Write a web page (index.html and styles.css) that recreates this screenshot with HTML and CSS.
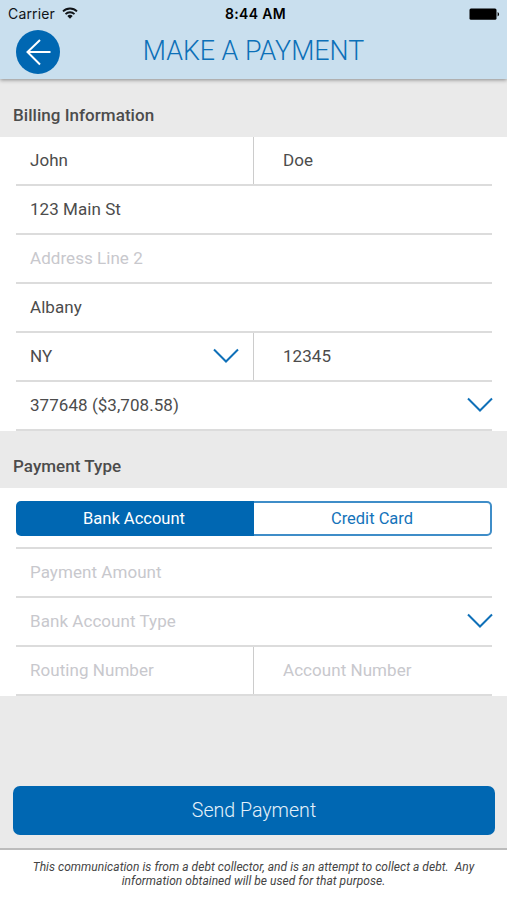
FILE: index.html
```html
<!DOCTYPE html>
<html lang="en">
<head>
<meta charset="utf-8">
<title>Make a Payment</title>
<link rel="stylesheet" href="styles.css">
</head>
<body>
<div class="screen">
  <header class="header">
    <div class="status">
      <div class="carrier"><span>Carrier</span>
        <svg class="wifi" viewBox="0 0 16 12" width="16" height="12"><g fill="none" stroke="#101418" stroke-width="1.8"><path d="M1 4.400a9.900 9.900 0 0 1 14 0"/><path d="M3.500 7.100a6.400 6.400 0 0 1 9 0"/></g><path d="M8 11.700 5.300 9a3.800 3.800 0 0 1 5.400 0z" fill="#101418"/></svg>
      </div>
      <span class="time">8:44 AM</span>
      <svg class="battery" viewBox="0 0 31 12" width="31" height="12"><rect x=".5" y=".4" width="27" height="11.4" rx="1.5"/><path d="M28.600 4v4.400c2-.8 2-3.600 0-4.400z"/></svg>
    </div>
    <div class="titlebar">
      <button class="back" aria-label="Back"><svg viewBox="0 0 44 44" width="44" height="44"><path d="M34.500 22H11.500M24 10 11.500 22 24 34.500" fill="none" stroke="#fff" stroke-width="2"/></svg></button>
      <h1 class="title">MAKE A PAYMENT</h1>
    </div>
  </header>

  <h2 class="section-title">Billing Information</h2>
  <section class="fields">
    <div class="row split"><div class="cell">John</div><div class="cell">Doe</div></div>
    <div class="row"><div class="cell">123 Main St</div></div>
    <div class="row"><div class="cell placeholder">Address Line 2</div></div>
    <div class="row"><div class="cell">Albany</div></div>
    <div class="row split"><div class="cell">NY<svg class="chevron" viewBox="0 0 26 16" width="26" height="16"><path d="m1 1.500 12 12 12-12"/></svg></div><div class="cell">12345</div></div>
    <div class="row"><div class="cell">377648 ($3,708.58)<svg class="chevron edge" viewBox="0 0 26 16" width="26" height="16"><path d="m1 1.500 12 12 12-12"/></svg></div></div>
  </section>

  <h2 class="section-title second">Payment Type</h2>
  <section class="fields">
    <div class="segments"><button class="segment active">Bank Account</button><button class="segment">Credit Card</button></div>
    <div class="row"><div class="cell placeholder">Payment Amount</div></div>
    <div class="row"><div class="cell placeholder">Bank Account Type<svg class="chevron edge" viewBox="0 0 26 16" width="26" height="16"><path d="m1 1.500 12 12 12-12"/></svg></div></div>
    <div class="row split"><div class="cell placeholder">Routing Number</div><div class="cell placeholder">Account Number</div></div>
  </section>

  <div class="actions"><button class="send">Send Payment</button></div>
  <footer class="footer">This communication is from a debt collector, and is an attempt to collect a debt.&nbsp; Any<br>information obtained will be used for that purpose.</footer>
</div>
</body>
</html>
```
FILE: styles.css
```css
* { box-sizing: border-box; }
body { margin: 0; font-family: Roboto, "Liberation Sans", sans-serif; color: #4c4c4c; }
button { font: inherit; border: 0; padding: 0; margin: 0; }
.screen { width: 507px; height: 900px; display: flex; flex-direction: column; background: #eaeaea; overflow: hidden; }
.header { flex: none; height: 79px; background: #c9dfee; box-shadow: 0 1px 4px rgba(0, 0, 0, .42); }
.status { height: 28px; display: grid; grid-template-columns: 1fr auto 1fr; align-items: center; padding: 0 7px 0 8px; font-family: Inter, sans-serif; font-size: 14px; line-height: 16px; color: #101418; }
.carrier { display: flex; align-items: center; gap: 7px; letter-spacing: .15px; margin-top: -1px; }
.wifi { margin-top: -1px; }
.time { font-weight: 600; letter-spacing: .3px; color: #000; margin: -1px -3px 0 0; }
.battery { justify-self: end; margin-top: -1px; }
.titlebar { height: 46px; display: grid; grid-template-columns: 44px 1fr 44px; align-items: center; padding: 0 15px; }
.back { width: 44px; height: 44px; border-radius: 50%; background: #0067b2; margin-top: 2px; margin-left: .5px; }
.back svg { display: block; }
.title { margin: -1px 0 0; font-size: 26.800px; font-weight: 300; color: #0c70b8; text-align: center; white-space: nowrap; }
.section-title { flex: none; margin: 0; height: 58px; padding: 25px 13px 0; font-size: 17px; line-height: 22px; font-weight: 500; letter-spacing: .04px; }
.section-title.second { height: 57px; padding-top: 24px; }
.fields { flex: none; background: #fff; padding: 0 15px 0 16px; }
.row { height: 49px; border-bottom: 2px solid #dcdcdc; display: grid; grid-template-columns: 1fr; }
.split { grid-template-columns: 238px 1fr; }
.cell { display: flex; align-items: center; justify-content: space-between; padding: 0 0 1px 14px; font-size: 17px; letter-spacing: .05px; }
.split .cell:first-child { border-right: 1px solid #ccc; padding-right: 14px; }
.split .cell:last-child { padding-left: 29px; }
.placeholder { color: #c8c8cd; }
.chevron { fill: none; stroke: #0f70b8; stroke-width: 2; }
.chevron.edge { margin-right: -1px; }
.segments { padding: 13px 0 11px; height: 61px; border-bottom: 2px solid #dcdcdc; display: grid; grid-template-columns: 238px 1fr; }
.segment { font-size: 16.500px; color: #1473ba; background: #fff; border: 2px solid #3f8dc8; border-left: 0; border-radius: 0 5px 5px 0; }
.segment.active { color: #fff; background: #0067b2; border: 0; border-radius: 5px 0 0 5px; padding-right: 2px; }
.actions { flex: 1; padding: 90px 12px 0 13px; }
.send { display: block; width: 100%; height: 49px; border-radius: 7px; background: #0067b2; color: #e5f1fa; font-size: 19.600px; font-weight: 300; }
.footer { flex: none; height: 52px; background: #fff; border-top: 2px solid #bcbcbc; padding-top: 10px; text-align: center; font-size: 12px; letter-spacing: .04px; line-height: 14px; font-style: italic; color: #444; white-space: nowrap; }
```
